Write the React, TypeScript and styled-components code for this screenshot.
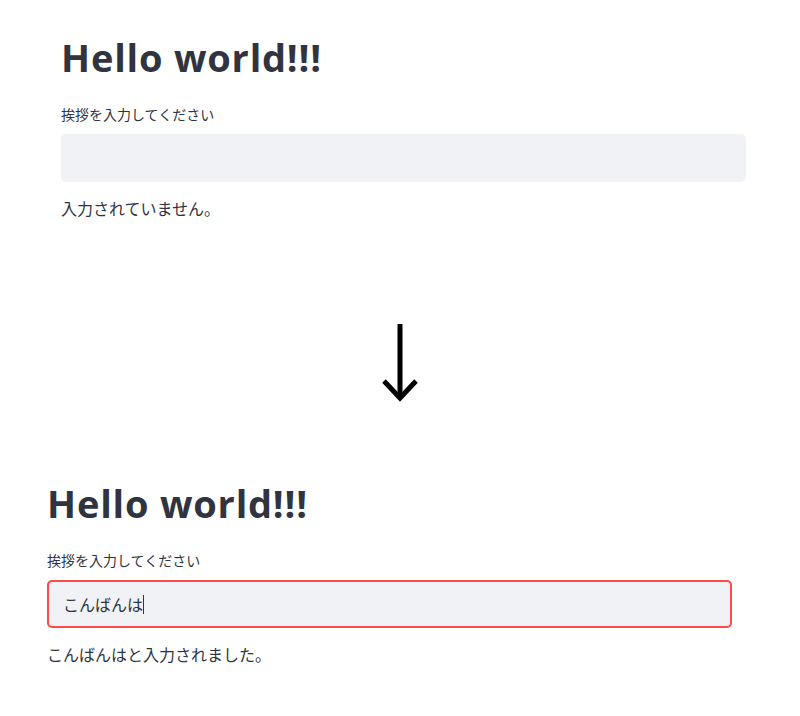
import React from "react";
import styled, { createGlobalStyle } from "styled-components";

const GlobalStyle = createGlobalStyle`
  html, body {
    margin: 0;
    padding: 0;
    background: #ffffff;
  }
  body {
    font-family: "Noto Sans CJK JP", "Noto Sans", sans-serif;
    color: #31333f;
  }
`;

type PanelProps = {
  value: string;
  focused?: boolean;
  indent: number;
};

function GreetingPanel({ value, focused, indent }: PanelProps) {
  return (
    <Panel $indent={indent}>
      <Title>Hello world!!!</Title>
      <Label>挨拶を入力してください</Label>
      <Field $focused={focused}>
        <FieldText>{value}</FieldText>
        {focused ? <Caret /> : null}
      </Field>
      <Status>{value ? `${value}と入力されました。` : "入力されていません。"}</Status>
    </Panel>
  );
}

export default function App() {
  return (
    <>
      <GlobalStyle />
      <Page>
        <GreetingPanel value="" indent={61} />
        <ArrowArea>
          <svg width="36" height="80" viewBox="0 0 36 80">
            <line x1="18" y1="0" x2="18" y2="74" stroke="#000" strokeWidth="5" />
            <polyline
              points="2,57 18,74 34,57"
              fill="none"
              stroke="#000"
              strokeWidth="5"
            />
          </svg>
        </ArrowArea>
        <GreetingPanel value="こんばんは" focused indent={47} />
      </Page>
    </>
  );
}

const Page = styled.div`
  display: flex;
  flex-direction: column;
  width: 800px;
  height: 716px;
  overflow: hidden;
`;

const Panel = styled.section<{ $indent: number }>`
  display: flex;
  flex-direction: column;
  height: 240px;
  padding: 34px 0 0 ${(p) => p.$indent}px;
  box-sizing: border-box;
  width: ${(p) => p.$indent + 685}px;
`;

const Title = styled.h1`
  margin: 0;
  font-family: "Open Sans", "Noto Sans", sans-serif;
  font-weight: 700;
  font-size: 38px;
  line-height: 46px;
  letter-spacing: 0.8px;
  color: #31333f;
`;

const Label = styled.div`
  margin-top: 24px;
  font-size: 14px;
  line-height: 20px;
  color: #31333f;
`;

const Field = styled.div<{ $focused?: boolean }>`
  display: flex;
  align-items: center;
  margin-top: 10px;
  height: 48px;
  box-sizing: border-box;
  padding: 0 14px;
  background: #f0f2f6;
  border: 2px solid ${(p) => (p.$focused ? "#ff4b4b" : "transparent")};
  border-radius: 5px;
  font-size: 16px;
  color: #31333f;
`;

const FieldText = styled.span`
  line-height: 20px;
`;

const Caret = styled.span`
  display: inline-block;
  width: 1px;
  height: 19px;
  background: #31333f;
`;

const Status = styled.p`
  margin: 14px 0 0;
  font-size: 16px;
  line-height: 24px;
  color: #31333f;
`;

const ArrowArea = styled.div`
  display: flex;
  justify-content: center;
  align-items: flex-start;
  height: 206px;
  padding-top: 84px;
  box-sizing: border-box;
`;
